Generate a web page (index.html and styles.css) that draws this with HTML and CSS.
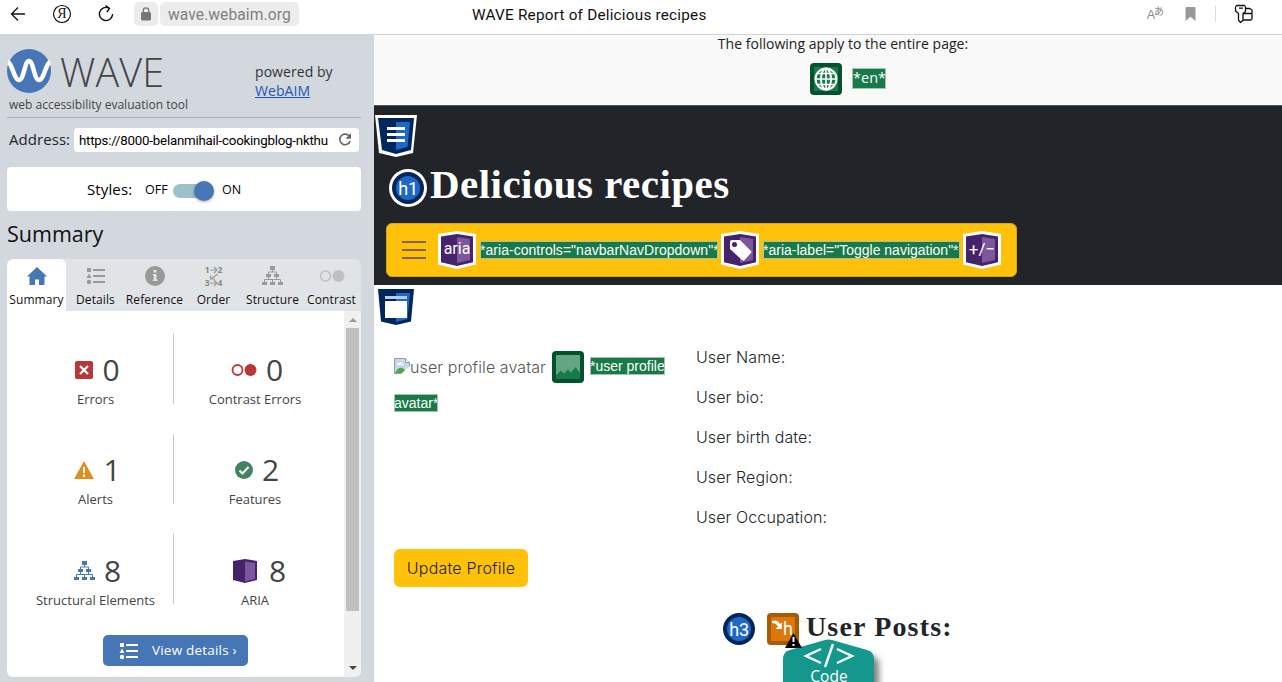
FILE: index.html
```html
<!DOCTYPE html>
<html lang="en">
<head>
<meta charset="utf-8">
<title>WAVE Report of Delicious recipes</title>
<link rel="stylesheet" href="styles.css">
</head>
<body>
<svg class="defs" width="0" height="0" aria-hidden="true">
  <symbol id="tree" viewBox="0 0 21 20">
    <path d="M8 0h5v4H8zM4 8h5v3H4zM12 8h5v3h-5zM0 16h5v3H0zM8 16h5v3H8zM16 16h5v3h-5z" fill="currentColor"/>
    <path d="M10.500 4v2M6.500 8V6h8v2M6.500 11v2M14.500 11v2M2.500 16v-2.500h16V16M10.500 13.500V16" fill="none" stroke="currentColor"/>
  </symbol>
  <symbol id="list" viewBox="0 0 20 18">
    <path d="M1 1h4v4H1zM3 6.500 5.500 11h-5z" fill="currentColor"/><circle cx="3" cy="15" r="2.200" fill="currentColor"/>
    <path d="M7 3h12M7 9h12M7 15h12" stroke="currentColor" stroke-width="2"/>
  </symbol>
  <symbol id="hex" viewBox="0 0 38 38">
    <path d="M0 3 19 0l19 3v30.500L19 38 0 33.500z" fill="#fff"/>
    <path d="M3 5.500 19 3l16 2.500v25.700L19 35 3 31.200z" fill="#46226a"/>
    <path d="M19 6l13 2v21l-13 3z" fill="#7d579d"/>
  </symbol>
</svg>

<header class="browser">
  <svg class="b-back" width="16" height="16" viewBox="0 0 16 16"><path d="M15 8H1.500M8 1.500 1.500 8 8 14.500" fill="none" stroke="#111" stroke-width="1.300"/></svg>
  <div class="b-ya"><svg width="20" height="20" viewBox="0 0 20 20"><circle cx="10" cy="10" r="8.500" fill="none" stroke="#111" stroke-width="1.200"/></svg><span>Я</span></div>
  <svg class="b-reload" width="18" height="18" viewBox="0 0 18 18"><path d="M12 3.100A6.600 6.600 0 1 0 15.600 9M8.500.5l4 2.800L9.800 7" fill="none" stroke="#111" stroke-width="1.400"/></svg>
  <div class="b-lock"><svg width="12" height="14" viewBox="0 0 12 14"><rect x="1" y="5" width="10" height="8.500" rx="1.500" fill="#777"/><path d="M3.300 5V3.600a2.700 2.700 0 0 1 5.400 0V5" fill="none" stroke="#777" stroke-width="1.400"/></svg></div>
  <div class="b-url">wave.webaim.org</div>
  <div class="b-title">WAVE Report of Delicious recipes</div>
  <div class="b-tools">
    <span class="b-tr">A<sup>あ</sup></span>
    <svg class="b-mark" width="12" height="14" viewBox="0 0 12 14"><path d="M1.500 0h8q1 0 1 1v13L5.500 9.800.5 14V1q0-1 1-1z" fill="#999"/></svg>
    <i></i>
    <svg width="20" height="20" viewBox="0 0 20 20" fill="none" stroke="#111" stroke-width="1.300" stroke-linejoin="round"><path d="M2.500 1.500h8l1 1.500v4.500L9 9.500v6.800L6.500 18.500 4.500 16.300V9.500L1.500 7V3zM5 4.200h4M11.500 4.500h4.200L18 6v8.500q0 1.500-1.500 1.500H9M9.500 9.500H18"/></svg>
  </div>
</header>

<div class="app">
<aside class="side">
  <div class="brand">
    <div>
      <div class="brand-row">
        <svg width="44" height="44" viewBox="0 0 44 44"><circle cx="22" cy="22" r="22" fill="#4776b6"/><path d="M1 13C5 14 7 31 12 31S17.500 12 22 12s5 19 10 19S39 14 43 13" fill="none" stroke="#fff" stroke-width="4.500"/></svg>
        <span class="wave">WAVE</span>
      </div>
      <div class="tagline">web accessibility evaluation tool</div>
    </div>
    <div class="powered">powered by<br><a href="#">WebAIM</a></div>
  </div>
  <div class="address">
    <label>Address:</label>
    <div class="field"><span>https://8000-belanmihail-cookingblog-nkthu</span>
      <svg width="14" height="14" viewBox="0 0 14 14"><path d="M11.500 3.400A5.300 5.300 0 1 0 12.200 8" fill="none" stroke="#666" stroke-width="1.600"/><path d="M13 0v5.800H7.500z" fill="#666"/></svg>
    </div>
  </div>
  <div class="styles-box"><span class="st-label">Styles:</span><span class="off">OFF</span><span class="toggle"><b></b></span><span class="on">ON</span></div>
  <h2>Summary</h2>
  <nav class="tabs">
    <div class="tab active"><svg width="20" height="18" viewBox="0 0 20 18"><path d="M10 0 0 9.500h2.500V18H8v-5.500h4V18h5.500V9.500H20z" fill="#4776b6"/></svg><span>Summary</span></div>
    <div class="tab"><svg width="20" height="18"><use href="#list"/></svg><span>Details</span></div>
    <div class="tab"><svg width="20" height="20" viewBox="0 0 20 20"><circle cx="10" cy="10" r="10" fill="#999"/><path d="M8.500 4h3v2.500h-3zM8 8h3.500v5.500h1V15H7.800v-1.500h1V9.500H8z" fill="#e0e4e7"/></svg><span>Reference</span></div>
    <div class="tab"><div class="order"><div>1<svg width="8" height="8" viewBox="0 0 8 8"><path d="M0 4h7M4 1l3 3-3 3"/></svg>2</div><svg class="diag" width="9" height="6" viewBox="0 0 9 6"><path d="M9 0 1.500 5M1.500 1.500V5H6"/></svg><div>3<svg width="8" height="8" viewBox="0 0 8 8"><path d="M0 4h7M4 1l3 3-3 3"/></svg>4</div></div><span>Order</span></div>
    <div class="tab"><svg width="21" height="20"><use href="#tree"/></svg><span>Structure</span></div>
    <div class="tab"><svg width="26" height="20" viewBox="0 0 26 20"><circle cx="6.500" cy="10" r="5" fill="none" stroke="#c0c0c0" stroke-width="1.500"/><circle cx="19.500" cy="10" r="6" fill="#c0c0c0"/></svg><span>Contrast</span></div>
  </nav>
  <div class="panel">
    <div class="content">
      <div class="grid">
        <div class="cell"><div class="num"><svg width="18" height="18" viewBox="0 0 18 18"><rect width="18" height="18" rx="2" fill="#b83838"/><path d="m5 5 8 8M13 5l-8 8" stroke="#fff" stroke-width="2.200"/></svg>0</div><p>Errors</p></div>
        <div class="cell"><div class="num"><svg width="26" height="18" viewBox="0 0 26 18"><circle cx="6.500" cy="9" r="5" fill="none" stroke="#b83838" stroke-width="1.800"/><circle cx="19.500" cy="9" r="6" fill="#b83838"/></svg>0</div><p>Contrast Errors</p></div>
        <div class="cell"><div class="num"><svg width="20" height="18" viewBox="0 0 20 18"><path d="m10 0 10 18H0z" fill="#df8f20"/><path d="M10 6v6M10 13.500V16" stroke="#fff" stroke-width="2"/></svg>1</div><p>Alerts</p></div>
        <div class="cell"><div class="num"><svg width="18" height="18" viewBox="0 0 18 18"><circle cx="9" cy="9" r="9" fill="#438261"/><path d="m4.500 9.500 3 3 6-6.500" fill="none" stroke="#fff" stroke-width="2"/></svg>2</div><p>Features</p></div>
        <div class="cell"><div class="num"><svg class="blue" width="21" height="20"><use href="#tree"/></svg>8</div><p>Structural Elements</p></div>
        <div class="cell aria"><div class="num"><svg width="24" height="24" viewBox="0 0 24 24"><path d="M0 2 12 0l12 2v19l-12 3L0 21z" fill="#46226a"/><path d="m12 2.500 10 1.500v16l-10 2.500z" fill="#7d579d"/></svg>8</div><p>ARIA</p></div>
      </div>
      <div class="view"><svg width="20" height="18"><use href="#list"/></svg><span>View details ›</span></div>
    </div>
    <div class="scroll"><i class="up"></i><b></b><i class="down"></i></div>
  </div>
</aside>

<main class="page">
  <section class="global">
    <p>The following apply to the entire page:</p>
    <div class="global-row">
      <svg width="32" height="32" viewBox="0 0 32 32"><rect width="32" height="32" rx="4" fill="#03522e"/><path d="M4 4h24v24H4z" fill="#177a48"/><g fill="none" stroke="#fff" stroke-width="2"><circle cx="16" cy="16" r="10.500"/><ellipse cx="16" cy="16" rx="5" ry="10.500"/><path d="M16 5v22M5 16h22M7 10.500h18M7 21.500h18" stroke-width="1.600"/></g></svg>
      <span class="tag en">*en*</span>
    </div>
  </section>
  <section class="hero">
    <svg class="shield" width="42" height="42" viewBox="0 0 42 42"><path d="M0 0h42l-4 38-17 4-17-4z" fill="#fff"/><path d="M3 3h36l-3 32-15 4-14-4z" fill="#00265b"/><path d="M21 7h14l-2.500 25L21 35z" fill="#2068c8"/><path d="M12 13.500h18M12 19.500h18M12 25.500h18" stroke="#fff" stroke-width="3"/></svg>
    <div class="title-row"><span class="h-badge h1b">h1</span><h1>Delicious recipes</h1></div>
    <div class="navbar">
      <svg class="burger" width="24" height="20" viewBox="0 0 24 20"><path d="M0 2h24M0 10h24M0 18h24" stroke="#59480f" stroke-width="1.700"/></svg>
      <div class="hexi"><svg width="38" height="38"><use href="#hex"/></svg><span>aria</span></div>
      <span class="tag controls">*aria-controls="navbarNavDropdown"*</span>
      <div class="hexi"><svg width="38" height="38" viewBox="0 0 38 38"><use href="#hex"/><path d="M9 11q0-2 2-2h8l11 11q1 1 0 2l-6.500 7q-1.300 1-2.500 0L9 18z" fill="#fff"/><circle cx="13.500" cy="13.500" r="2.500" fill="#46226a"/></svg></div>
      <span class="tag label">*aria-label="Toggle navigation"*</span>
      <div class="hexi"><svg width="38" height="38"><use href="#hex"/></svg><span class="pm">+/−</span></div>
    </div>
  </section>
  <section class="body">
    <svg class="mainicon" width="36" height="36" viewBox="0 0 36 36"><path d="M0 0h36l-3 32.500L18 36 3 32.500z" fill="#00265b"/><path d="M18 4h14l-2.500 26L18 33z" fill="#2068c8"/><path d="M7 7h22v3H7z" fill="#b9cce8"/><path d="M7 12h22v17H7z" fill="#fff"/></svg>
    <div class="profile">
      <div class="avatar">
        <div class="avatar-line">
          <svg class="broken" width="16" height="16" viewBox="0 0 16 16"><path d="M.5.500h11l4 4v11H.5z" fill="#c5d7f4" stroke="#999"/><path d="M11.500.500v4h4" fill="#fff" stroke="#999"/><path d="M3 7q0-2 2-2 2-2 3 1 2 0 2 1z" fill="#fff"/><path d="M1 15q4-8 9-4l2 4z" fill="#55a545"/><path d="M16 8 7 16h9z" fill="#fff"/></svg>
          <span class="alt">user profile avatar</span>
          <svg class="imgicon" width="32" height="32" viewBox="0 0 32 32"><rect width="32" height="32" rx="4" fill="#03522e"/><path d="M4 4h24v24H4z" fill="#177a48"/><path d="M4 4h24v18l-4.500-6-4.500 5.500-3-3-4 4-3-3-5 4.500z" fill="#62a782"/></svg>
          <span class="tag">*user profile</span>
        </div>
        <span class="tag second">avatar*</span>
      </div>
      <div class="info"><p>User Name:</p><p>User bio:</p><p>User birth date:</p><p>User Region:</p><p>User Occupation:</p></div>
    </div>
    <div class="update">Update Profile</div>
    <div class="posts">
      <span class="h-badge">h3</span>
      <div class="skip"><svg width="12" height="10" viewBox="0 0 12 10"><path d="M0 1q5-2 8 3l2-1.500V9H3.500L6 6.500Q4 3 0 3z" fill="#fff"/></svg><span>h</span>
        <svg class="warn" width="17" height="15" viewBox="0 0 17 15"><path d="m8.500 0 8.500 15H0z"/><path d="M8.500 4v5M8.500 11v2" stroke="#fff" stroke-width="2"/></svg></div>
      <h3>User Posts:</h3>
      <div class="code"><svg width="108" height="50" viewBox="0 0 108 50"><defs><filter id="shade" x="-20%" y="-20%" width="150%" height="150%"><feDropShadow dx="5" dy="6" stdDeviation="3" flood-opacity=".5"/></filter></defs><path d="M0 20q0-7 7-9L42 1q3.500-1 7 0l35 10q7 2 7 9v40H0z" fill="#19978d" filter="url(#shade)"/><path d="M38 10 23 17l15 7M54 10l15 7-15 7M50 5 42 28" fill="none" stroke="#fff" stroke-width="2.400"/></svg><span>Code</span></div>
    </div>
  </section>
</main>
</div>
</body>
</html>
```
FILE: styles.css
```css
* { box-sizing: border-box; }
body { margin: 0; width: 1282px; height: 682px; overflow: hidden; background: #fff; font-family: "Open Sans", sans-serif; color: #212529; }
p, h1, h2, h3 { margin: 0; font-weight: 400; }
svg { display: block; flex: none; }
span { white-space: nowrap; }
.defs { position: absolute; }

.browser { display: flex; align-items: center; height: 35px; padding: 0 28px 6px 10px; border-bottom: 1px solid #d2d4d6; background: #fff; }
.b-ya { position: relative; margin-left: 26px; }
.b-ya span { position: absolute; inset: 0; text-align: center; font: 14px/20px "Liberation Serif", serif; color: #111; }
.b-reload { margin-left: 25px; }
.b-lock { display: grid; place-items: center; width: 24px; height: 24px; margin-left: 19px; border-radius: 5px; background: #ececec; }
.b-url { width: 139px; height: 24px; margin-left: 2px; padding-left: 8px; border-radius: 5px; background: #ececec; color: #808080; font: 15.6px/26px Roboto, sans-serif; letter-spacing: .08px; }
.b-title { width: 260px; margin-left: 173px; font: 15.3px/24px Roboto, sans-serif; letter-spacing: .22px; padding-top: 1px; color: #111; white-space: nowrap; }
.b-tools { display: flex; align-items: center; margin-left: auto; }
.b-tr { display: flex; align-items: flex-end; height: 16px; font: 12px/13px "Liberation Sans", sans-serif; color: #888; }
.b-tr sup { align-self: flex-start; margin-left: -1px; font: 10px/10px "Noto Sans CJK JP", sans-serif; }
.b-mark { margin-left: 21px; }
.b-tools i { width: 1px; height: 16px; margin: 0 18px; background: #ddd; }

.app { display: grid; grid-template-columns: 374px 908px; height: 647px; }
.side { display: flex; flex-direction: column; padding: 0 13px 5px 7px; background: #d3d8df; overflow: hidden; }
.brand { display: flex; height: 83px; flex: none; padding-top: 14px; border-bottom: 1px solid #a9aeba; }
.brand > div:first-child { width: 248px; }
.brand-row { display: flex; height: 46px; }
.wave { margin-left: 9px; font: 300 39.500px/46px "Open Sans", sans-serif; letter-spacing: .2px; color: #444; }
.tagline { margin: 1px 0 0 2px; font-size: 12px; line-height: 18px; color: #444; }
.powered { padding-top: 13px; font-size: 14px; line-height: 19px; letter-spacing: .06px; color: #333; }
.powered a { color: #2456b4; }
.address { display: flex; align-items: center; flex: none; height: 24px; margin: 10px 2px 0; }
.address label { width: 65px; font-size: 15px; line-height: 22px; margin-top: -2px; letter-spacing: .06px; }
.field { display: flex; align-items: center; width: 285px; height: 24px; padding-left: 5px; border-radius: 4px; background: #fff; color: #000; font: 13.3px/24px Roboto, sans-serif; letter-spacing: -.22px; }
.field span { width: 253px; margin-top: 1px; }
.field svg { margin-left: 6px; }
.styles-box { display: flex; align-items: center; flex: none; height: 44px; margin-top: 15px; padding-left: 80px; border-radius: 4px; background: #fff; color: #000; font-size: 12.500px; }
.st-label { width: 58px; font-size: 15px; letter-spacing: .12px; }
.off { width: 28px; }
.toggle { position: relative; width: 40px; height: 14px; margin-top: 3px; border-radius: 7px; background: #9cc1cb; }
.toggle b { position: absolute; right: -1px; top: -3px; width: 20px; height: 20px; border-radius: 50%; background: #4776b6; box-shadow: 0 1px 3px #0005; }
.on { margin-left: 9px; }
.side h2 { flex: none; height: 49px; padding-top: 5px; font-size: 21.500px; line-height: 36px; color: #111; }
.tabs { display: grid; grid-template-columns: repeat(6, 59px); flex: none; height: 52px; margin-top: -1px; border-radius: 6px 6px 0 0; background: #e0e4e7; overflow: hidden; }
.tab { display: grid; grid-template-rows: 35px 14px; justify-items: center; align-items: center; color: #999; }
.tab svg { margin-top: -1px; }
.tab span { font-size: 12px; line-height: 14px; margin-top: -2px; letter-spacing: .1px; color: #111; }
.tab.active { border-radius: 6px 6px 0 0; background: #fff; }
.order { display: grid; justify-items: center; font: 700 8.500px/8px "Open Sans", sans-serif; color: #888; }
.order div { display: flex; }
.order path { fill: none; stroke: #999; stroke-width: 1.200; }
.tab .diag { margin: -1px 0; }
.tab .order svg { margin-top: 0; }
.panel { display: flex; flex: none; height: 366px; border-radius: 0 0 6px 6px; background: #fff; overflow: hidden; }
.content { width: 337px; padding-top: 23px; }
.grid { display: grid; grid-template-columns: 167px 153px; grid-template-rows: 70px 70px 70px; row-gap: 30px; }
.cell { text-align: center; padding-top: 18px; color: #444; }
.cell:nth-child(odd) { border-right: 1px solid #c9c9c9; padding-left: 11px; }
.cell:nth-child(even) { padding-left: 9px; }
.cell:nth-child(n+5) { padding-top: 19px; }
.num { display: flex; align-items: center; justify-content: center; gap: 9px; height: 36px; padding-left: 4px; font-size: 30px; line-height: 36px; }
.cell p { margin-top: 2px; font-size: 13px; line-height: 18px; color: #444; }
.blue { color: #4776b6; }
.aria .num { gap: 12px; padding-left: 9px; }
.view { display: flex; align-items: center; width: 145px; height: 31px; margin: 31px 0 0 96px; padding-left: 16px; border-radius: 5px; background: #4776b6; color: #fff; font-size: 14px; }
.view span { margin: -1px 0 0 13px; font-size: 13.500px; letter-spacing: .2px; }
.scroll { display: grid; grid-template-rows: 17px 283px 1fr; justify-items: center; width: 17px; background: #f0f0f0; }
.scroll b { width: 13px; background: #c0c0c0; }
.scroll i { width: 0; height: 0; align-self: center; border: 4px solid transparent; }
.scroll .up { border-top: 0; border-bottom-color: #999; }
.scroll .down { align-self: end; border-bottom: 0; border-top-color: #444; margin-bottom: 7px; }

.page { overflow: hidden; background: #fff; }
.global { height: 71px; padding-left: 30px; background: #f9f9f9; border-bottom: 1px solid #555; color: #222; }
.global p { text-align: center; font-size: 14px; line-height: 18px; height: 19px; letter-spacing: .02px; }
.global-row { display: flex; margin: 9px 0 0 406px; }
.tag { align-self: center; flex: none; font: 14px/16px "Liberation Sans", sans-serif; color: #fff; background: #177a48; outline: 1px solid #a9c3ab; outline-offset: -1px; height: 18px; padding: 1px 0; }
.tag.en { margin-left: 10px; width: 34px; height: 21px; padding: 0 1px; font: 14.500px/20px "Open Sans", sans-serif; margin-top: -2px; }
.hero { height: 179px; padding-top: 9px; background: #212529; }
.shield { margin-left: 1px; }
.title-row { display: flex; height: 58px; padding: 9px 0 0 14px; }
.h-badge { flex: none; width: 32px; height: 32px; border: 4px solid #00265b; border-radius: 50%; background: #2068c8; color: #fff; text-align: center; font: 18px/25px Roboto, sans-serif; letter-spacing: -.3px; }
.h1b { box-shadow: 0 0 0 3px #fff; margin: 6px 3px 0 4px; }
.hero h1 { margin-left: 3px; font: 700 41px/46px "Liberation Serif", serif; letter-spacing: .45px; color: #fff; white-space: nowrap; margin-top: -5px; }
.navbar { display: flex; align-items: center; width: 631px; height: 54px; margin: 8px 0 0 12px; padding-left: 15px; border: 1px solid #d4a519; border-radius: 6px; background: #ffc10a; }
.hexi { position: relative; margin-left: 12px; }
.hexi span { position: absolute; inset: 0; text-align: center; font: 16px/35px Roboto, sans-serif; color: #fff; }
.hexi .pm { font-size: 17px; line-height: 37px; }
.tag.controls { width: 238px; margin-left: 4px; letter-spacing: .03px; }
.tag.label { width: 197px; margin-left: 4px; }
.tag + .hexi { margin-left: 3px; }
.body { padding: 4px 0 0 4px; }
.profile { display: grid; grid-template-columns: 302px 1fr; height: 206px; margin: 18px 0 0 16px; }
.avatar-line { display: flex; align-items: center; height: 48px; }
.broken { margin-top: -3px; }
.avatar-line .tag { margin-top: -2px; }
.alt { color: #555; }
.imgicon { margin: 0 6px; }
.alt, .info p, .update { font-family: Inter, sans-serif; font-size: 16px; font-weight: 300; letter-spacing: .1px; }
.second { display: inline-block; margin-top: 2px; }
.info p { height: 40px; line-height: 28px; }
.update { width: 134px; height: 38px; margin-left: 16px; border-radius: 6px; background: #ffc10a; text-align: center; line-height: 38px; letter-spacing: .2px; }
.posts { position: relative; display: flex; margin: 26px 0 0 345px; }
.skip { position: relative; z-index: 1; width: 32px; height: 32px; margin-left: 12px; border: 4px solid #a65b08; border-radius: 4px; background: #dd7808; color: #fff; }
.skip span { position: absolute; left: 12px; top: 2px; font: 18px/20px Roboto, sans-serif; }
.skip svg { position: absolute; left: 1px; top: 3px; }
.skip .warn { left: 14px; top: 16px; z-index: 2; }
.posts h3 { margin: -4px 0 0 7px; font: 700 28px/36px "Liberation Serif", serif; letter-spacing: 1.15px; }
.code { position: absolute; left: 60px; top: 26px; }
.code span { position: absolute; left: 0; top: 27px; width: 92px; text-align: center; color: #fff; font-size: 15.500px; line-height: 20px; }
```
